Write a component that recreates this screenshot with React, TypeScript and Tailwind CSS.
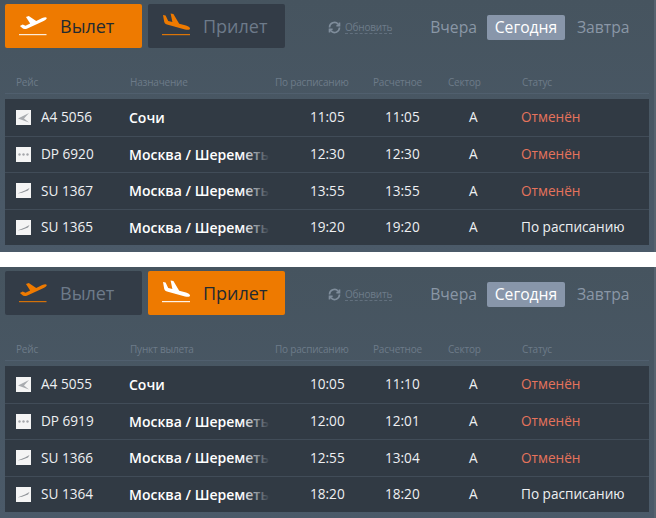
import React from "react";

type Flight = {
  logo: "a4" | "dp" | "su";
  code: string;
  city: string;
  planned: string;
  estimated: string;
  status: string;
};

const departures: Flight[] = [
  { logo: "a4", code: "A4 5056", city: "Сочи", planned: "11:05", estimated: "11:05", status: "Отменён" },
  { logo: "dp", code: "DP 6920", city: "Москва / Шереметьево", planned: "12:30", estimated: "12:30", status: "Отменён" },
  { logo: "su", code: "SU 1367", city: "Москва / Шереметьево", planned: "13:55", estimated: "13:55", status: "Отменён" },
  { logo: "su", code: "SU 1365", city: "Москва / Шереметьево", planned: "19:20", estimated: "19:20", status: "По расписанию" },
];

const arrivals: Flight[] = [
  { logo: "a4", code: "A4 5055", city: "Сочи", planned: "10:05", estimated: "11:10", status: "Отменён" },
  { logo: "dp", code: "DP 6919", city: "Москва / Шереметьево", planned: "12:00", estimated: "12:01", status: "Отменён" },
  { logo: "su", code: "SU 1366", city: "Москва / Шереметьево", planned: "12:55", estimated: "13:04", status: "Отменён" },
  { logo: "su", code: "SU 1364", city: "Москва / Шереметьево", planned: "18:20", estimated: "18:20", status: "По расписанию" },
];

const TakeoffIcon = ({ color }: { color: string }) => (
  <svg width="30" height="28" viewBox="0 0 30 28" fill={color}>
    <g transform="translate(0,-1.5) scale(0.93,1)">
      <path d="M1 15.5 L4 14 L7 15.2 L12 13 L7.5 6.5 L10.5 5.6 L18.5 10.6 L25 7.6 C27.5 6.6 29.5 6.6 29.8 7.4 C30 8.4 28.5 9.4 26.5 10.4 L9 18 C6.5 19 4.5 18.6 3.5 17.6 Z" />
    </g>
    <rect x="0" y="22" width="27.5" height="1.2" opacity="0.85" />
  </svg>
);

const LandingIcon = ({ color }: { color: string }) => (
  <svg width="30" height="28" viewBox="0 0 30 28" fill={color}>
    <path d="M2 3 L4.6 3.4 L7.2 9 L11.4 10 L9.6 1.6 L12.4 2 L18.2 11.8 L25 13.6 C27.6 14.4 29.4 15.8 29 17 C28.6 18 26.4 18 24 17.4 L6 12.6 C4.4 12 3.4 11 3.2 9.8 Z" />
    <rect x="1" y="22" width="28" height="1.2" opacity="0.9" />
  </svg>
);

const AirlineLogo = ({ logo }: { logo: Flight["logo"] }) => (
  <div className="w-[15px] h-[15px] bg-[#f4f4f4] shrink-0 flex items-center justify-center">
    <svg width="13" height="13" viewBox="0 0 13 13">
      {logo === "a4" && <path d="M1 7.5 L12 2 L7 7.5 L12 11.5 Z" fill="#a9acb0" />}
      {logo === "dp" && (
        <g fill="#a5a7ab">
          <circle cx="2.5" cy="6.5" r="1.2" />
          <circle cx="6.5" cy="6.5" r="1.2" />
          <circle cx="10.5" cy="6.5" r="1.2" />
        </g>
      )}
      {logo === "su" && <path d="M0.5 9.5 L8 6.5 L12.5 4 L11 6.5 L5 8.8 Z" fill="#8f9398" />}
    </svg>
  </div>
);

const Board = ({ kind, flights }: { kind: "dep" | "arr"; flights: Flight[] }) => {
  const isDep = kind === "dep";
  const activeBtn = "bg-[#ee7a00] text-[#232a31]";
  const idleBtn = "bg-[#333c47] text-[#6d7a8a]";
  return (
    <section className="h-[252px] bg-gradient-to-b from-[#46545f] to-[#4b5a69] border-r-2 border-[#56636f] pt-1 px-[5px]">
      <div className="flex items-start h-[44px]">
        <div className={`w-[137px] h-[44px] rounded-[2px] flex items-center pl-[14px] gap-[11px] text-[18px] ${isDep ? activeBtn : idleBtn}`}>
          <TakeoffIcon color={isDep ? "#ffffff" : "#ee7a00"} />
          <span>Вылет</span>
        </div>
        <div className={`ml-[6px] w-[137px] h-[44px] rounded-[2px] flex items-center pl-[13px] gap-[12px] text-[18px] ${isDep ? idleBtn : activeBtn}`}>
          <LandingIcon color={isDep ? "#ee7a00" : "#ffffff"} />
          <span>Прилет</span>
        </div>
        <div className="ml-[42px] mt-[16px] flex items-center gap-[3px]">
          <svg width="15" height="15" viewBox="0 0 24 24" fill="none" stroke="#7f8d9b" strokeWidth="2.6">
            <path d="M4 12a8 8 0 0 1 14-5.3L20 9" />
            <path d="M20 12a8 8 0 0 1-14 5.3L4 15" />
            <path d="M20 4v5h-5" />
            <path d="M4 20v-5h5" />
          </svg>
          <span className="text-[10px] text-[#6e7c8a] border-b border-dashed border-[#62707e] leading-[12px] tracking-[-0.2px]">Обновить</span>
        </div>
        <div className="ml-[38px] mt-[11px] flex items-center text-[15.7px] text-[#8a97a6]">
          <span>Вчера</span>
          <span className="ml-[10px] w-[78px] h-[25px] rounded-[2px] bg-[#8896aa] text-white flex items-center justify-center">Сегодня</span>
          <span className="ml-[12px]">Завтра</span>
        </div>
      </div>

      <div className="mt-[23px] h-[23px] grid grid-cols-[114px_145px_98px_75px_74px_1fr] pl-[11px] text-[10px] text-[#6d7b89] border-b border-[#505f6e] tracking-[-0.2px] items-center whitespace-nowrap">
        <span>Рейс</span>
        <span>{isDep ? "Назначение" : "Пункт вылета"}</span>
        <span>По расписанию</span>
        <span>Расчетное</span>
        <span>Сектор</span>
        <span>Статус</span>
      </div>

      <div className="mt-[5px] bg-[#313a44] text-[13.6px] text-[#eef0f2]">
        {flights.map((f, i) => (
          <div
            key={f.code}
            className={`h-[36.5px] grid grid-cols-[113px_181px_75px_84px_52px_1fr] items-center pl-[11px] whitespace-nowrap ${i > 0 ? "border-t border-[#414c58]" : ""}`}
          >
            <div className="flex items-center gap-[10px]">
              <AirlineLogo logo={f.logo} />
              <span>{f.code}</span>
            </div>
            <div className="relative overflow-hidden w-[141px] text-[14px] font-semibold text-white">
              {f.city}
              <div className="absolute right-0 top-0 bottom-0 w-[28px] bg-gradient-to-r from-transparent to-[#313a44]" />
            </div>
            <span>{f.planned}</span>
            <span>{f.estimated}</span>
            <span>A</span>
            <span className={f.status === "Отменён" ? "text-[#e6735c]" : ""}>{f.status}</span>
          </div>
        ))}
      </div>
    </section>
  );
};

export default function App() {
  return (
    <div className="w-[656px] h-[518px] bg-white overflow-hidden font-['Open_Sans',sans-serif]">
      <Board kind="dep" flights={departures} />
      <div className="h-[15px]" />
      <Board kind="arr" flights={arrivals} />
    </div>
  );
}
